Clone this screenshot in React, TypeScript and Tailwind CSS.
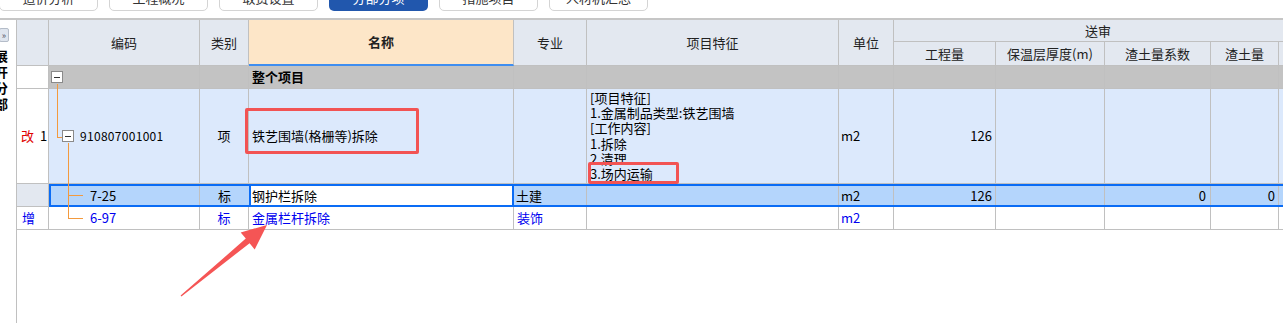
const font = "font-['Noto_Sans_CJK_SC','Liberation_Sans',sans-serif]";
const cell = "shrink-0 h-full border-r border-b border-[#c0c0c0] flex items-center relative";

const tabs = ["造价分析", "工程概况", "取费设置", "分部分项", "措施项目", "人材机汇总"];

function Minus() {
  return (
    <span className="w-[12px] h-[12px] shrink-0 border border-[#8a8a8a] bg-white flex items-center justify-center">
      <span className="w-[6px] h-px bg-[#333]" />
    </span>
  );
}

const tree = "absolute bg-[#f39a3e]";

export default function App() {
  return (
    <div className={`relative w-[1283px] h-[323px] overflow-hidden bg-white text-[13px] text-black ${font}`}>
      {/* tab strip, mostly scrolled out of view */}
      <div className="h-[18px] overflow-hidden">
        <div className="flex gap-[11px] -ml-px -mt-[15px]">
          {tabs.map((t) => (
            <div
              key={t}
              className={`w-[99px] h-[26px] shrink-0 rounded-[5px] flex items-center justify-center text-[13px] ${
                t === "分部分项" ? "bg-[#2157ad] text-white" : "bg-white border border-[#d4d4d4] text-[#333]"
              }`}
            >
              {t}
            </div>
          ))}
        </div>
      </div>
      <div className="h-[2px] bg-[#c6c6c6]" />

      <div className="flex h-[303px]">
        {/* collapsed side panel */}
        <div className="w-[17px] shrink-0 border-r border-[#c0c0c0] overflow-hidden flex flex-col items-start">
          <div className="mt-[8px] w-[10px] h-[14px] -ml-px bg-[#dfe5ee] border border-[#b4bcc8] rounded-[2px] flex items-center justify-center text-[9px] leading-none text-[#556]">
            »
          </div>
          <div className="mt-[6px] -ml-[5px] flex flex-col text-[13px] font-bold leading-[16px]">
            <span>展</span>
            <span>开</span>
            <span>分</span>
            <span>部</span>
          </div>
        </div>

        <div className="flex flex-col">
          {/* header */}
          <div className="flex h-[46px] bg-[#e3e8f0] text-[#222]">
            <div className={`${cell} w-[32px]`} />
            <div className={`${cell} w-[151px] justify-center`}>编码</div>
            <div className={`${cell} w-[49px] justify-center`}>类别</div>
            <div className={`${cell} w-[265px] justify-center bg-[#fde6c8] font-bold border-b-2 border-b-[#3f8ef0]`}>名称</div>
            <div className={`${cell} w-[73px] justify-center`}>专业</div>
            <div className={`${cell} w-[252px] justify-center`}>项目特征</div>
            <div className={`${cell} w-[55px] justify-center`}>单位</div>
            <div className="w-[408px] shrink-0 flex flex-col">
              <div className="h-[22px] border-b border-[#c0c0c0] flex items-center justify-center">送审</div>
              <div className="h-[24px] flex">
                <div className={`${cell} w-[102px] justify-center`}>工程量</div>
                <div className={`${cell} w-[109px] justify-center`}>保温层厚度(m)</div>
                <div className={`${cell} w-[106px] justify-center`}>渣土量系数</div>
                <div className={`${cell} w-[68px] justify-center`}>渣土量</div>
                <div className={`${cell} w-[23px]`} />
              </div>
            </div>
          </div>

          {/* whole project row */}
          <div className="flex h-[23px] bg-[#c3c3c3]">
            <div className={`${cell} w-[32px] bg-white`} />
            <div className={`${cell} w-[151px] pl-[2px] border-[#b0b0b0]`}>
              <Minus />
              <span className={`${tree} left-[8px] top-[18px] bottom-[-1px] w-px`} />
            </div>
            <div className={`${cell} w-[49px] border-[#b0b0b0]`} />
            <div className={`${cell} w-[265px] pl-[3px] font-bold border-[#b0b0b0]`}>整个项目</div>
            <div className={`${cell} w-[73px] border-[#b0b0b0]`} />
            <div className={`${cell} w-[252px] border-[#b0b0b0]`} />
            <div className={`${cell} w-[55px] border-[#b0b0b0]`} />
            <div className={`${cell} w-[102px] border-[#b0b0b0]`} />
            <div className={`${cell} w-[109px] border-[#b0b0b0]`} />
            <div className={`${cell} w-[106px] border-[#b0b0b0]`} />
            <div className={`${cell} w-[68px] border-[#b0b0b0]`} />
            <div className={`${cell} w-[23px] border-[#b0b0b0]`} />
          </div>

          {/* item row */}
          <div className="flex h-[95px] bg-[#dce9fc]">
            <div className={`${cell} w-[32px] bg-white pl-[4px] gap-[6px]`}>
              <span className="text-[#e00000]">改</span>
              <span>1</span>
            </div>
            <div className={`${cell} w-[151px] pl-[13px]`}>
              <span className={`${tree} left-[8px] top-0 h-[48px] w-px`} />
              <span className={`${tree} left-[8px] top-[48px] h-px w-[5px]`} />
              <span className={`${tree} left-[19px] top-[54px] bottom-[-1px] w-px`} />
              <Minus />
              <span className="ml-[6px] text-[12px] tracking-[0.3px]">910807001001</span>
            </div>
            <div className={`${cell} w-[49px] justify-center`}>项</div>
            <div className={`${cell} w-[265px] pl-[3px]`}>铁艺围墙(格栅等)拆除</div>
            <div className={`${cell} w-[73px]`} />
            <div className={`${cell} w-[252px] pl-[3px] items-start pt-px`}>
              <div className="leading-[15.2px] whitespace-pre">
                {"[项目特征]\n1.金属制品类型:铁艺围墙\n[工作内容]\n1.拆除\n2.清理\n3.场内运输"}
              </div>
            </div>
            <div className={`${cell} w-[55px] pl-[2px]`}>m2</div>
            <div className={`${cell} w-[102px] justify-end pr-[3px]`}>126</div>
            <div className={`${cell} w-[109px]`} />
            <div className={`${cell} w-[106px]`} />
            <div className={`${cell} w-[68px]`} />
            <div className={`${cell} w-[23px]`} />
          </div>

          {/* selected quota row */}
          <div className="flex h-[23px]">
            <div className={`${cell} w-[32px] bg-[#e3e8f0]`} />
            <div className="flex border-2 border-[#0a6cf5] bg-[#b4d5fc]">
              <div className="shrink-0 h-full w-[149px] border-r border-[#c0c0c0] flex items-center relative pl-[39px]">
                <span className={`${tree} left-[17px] -top-[3px] -bottom-[3px] w-px`} />
                <span className={`${tree} left-[17px] top-[9px] h-px w-[15px]`} />
                7-25
              </div>
              <div className="shrink-0 h-full w-[49px] flex items-center justify-center">标</div>
              <div className="shrink-0 h-full w-[265px] border-x-2 border-[#0a6cf5] bg-white flex items-center pl-[1px]">钢护栏拆除</div>
              <div className="shrink-0 h-full w-[73px] border-r border-[#c0c0c0] flex items-center pl-[2px]">土建</div>
              <div className="shrink-0 h-full w-[252px] border-r border-[#c0c0c0]" />
              <div className="shrink-0 h-full w-[55px] border-r border-[#c0c0c0] flex items-center pl-[2px]">m2</div>
              <div className="shrink-0 h-full w-[102px] border-r border-[#c0c0c0] flex items-center justify-end pr-[3px]">126</div>
              <div className="shrink-0 h-full w-[109px] border-r border-[#c0c0c0]" />
              <div className="shrink-0 h-full w-[106px] border-r border-[#c0c0c0] flex items-center justify-end pr-[4px]">0</div>
              <div className="shrink-0 h-full w-[68px] border-r border-[#c0c0c0] flex items-center justify-end pr-[3px]">0</div>
              <div className="shrink-0 h-full w-[23px]" />
            </div>
          </div>

          {/* added quota row */}
          <div className="flex h-[23px] bg-white text-[#0000f0]">
            <div className={`${cell} w-[32px] pl-[5px]`}>增</div>
            <div className={`${cell} w-[151px] pl-[41px]`}>
              <span className={`${tree} left-[19px] top-0 h-[11px] w-px`} />
              <span className={`${tree} left-[19px] top-[11px] h-px w-[15px]`} />
              6-97
            </div>
            <div className={`${cell} w-[49px] justify-center`}>标</div>
            <div className={`${cell} w-[265px] pl-[3px]`}>金属栏杆拆除</div>
            <div className={`${cell} w-[73px] pl-[3px]`}>装饰</div>
            <div className={`${cell} w-[252px]`} />
            <div className={`${cell} w-[55px] pl-[2px]`}>m2</div>
            <div className={`${cell} w-[102px]`} />
            <div className={`${cell} w-[109px]`} />
            <div className={`${cell} w-[106px]`} />
            <div className={`${cell} w-[68px]`} />
            <div className={`${cell} w-[23px]`} />
          </div>
        </div>
      </div>

      {/* annotations */}
      <div className="absolute left-[245px] top-[108px] w-[174px] h-[46px] border-[3px] border-[#f25353] rounded-[2px]" />
      <div className="absolute left-[588px] top-[162px] w-[91px] h-[22px] border-[3px] border-[#f25353] rounded-[2px]" />
      <svg className="absolute left-0 top-0" width="1283" height="323" viewBox="0 0 1283 323">
        <polygon
          points="267,225 254.7,249.4 249.6,243.2 181.4,296.4 180.6,295.6 245.8,238.6 240.7,232.4"
          fill="#f55555"
        />
      </svg>
    </div>
  );
}
